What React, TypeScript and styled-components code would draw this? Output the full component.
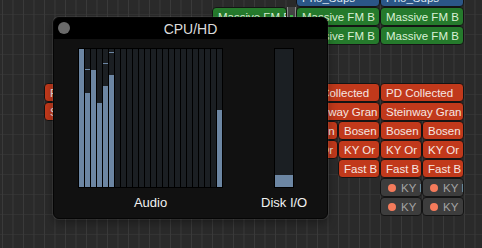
import styled, { createGlobalStyle, css } from 'styled-components';

const GlobalStyle = createGlobalStyle`
  html, body {
    margin: 0;
    padding: 0;
    background: #2a2a2a;
    overflow: hidden;
  }
`;

const Canvas = styled.div`
  position: relative;
  width: 482px;
  height: 248px;
  overflow: hidden;
  padding-left: 2px;
  box-sizing: border-box;
  background-color: #2a2a2a;
  background-image:
    linear-gradient(to right, #3a3a3a 1px, transparent 1px),
    linear-gradient(to bottom, #333 1px, transparent 1px);
  background-size: 10.5px 20px, 10.5px 20px;
  background-position: 2px 0, 0 14px;
  font-family: 'Liberation Sans', Arial, sans-serif;
`;

const ClipGrid = styled.div`
  display: grid;
  grid-template-columns: repeat(12, 42px);
  grid-template-rows: repeat(12, 19px);
  margin-top: -12px;
`;

type Tone = 'blue' | 'green' | 'red' | 'gray';

const tones: Record<Tone, { bg: string; fg: string }> = {
  blue: { bg: '#2b5687', fg: '#dfe8f2' },
  green: { bg: '#257a2c', fg: '#d9f1d6' },
  red: { bg: '#c1391b', fg: '#f6e7e2' },
  gray: { bg: '#3d3d3d', fg: '#a3a3a3' },
};

const Clip = styled.div<{ $col: number; $row: number; $span: number; $tone: Tone; $trim?: boolean }>`
  grid-column: ${({ $col, $span }) => `${$col} / span ${$span}`};
  grid-row: ${({ $row }) => $row};
  display: flex;
  align-items: center;
  gap: 5px;
  box-sizing: border-box;
  height: 19px;
  padding: 0 3px 0 5px;
  border: 1px solid #141414;
  border-radius: 4px;
  background: ${({ $tone }) => tones[$tone].bg};
  color: ${({ $tone }) => tones[$tone].fg};
  font-size: 11.5px;
  white-space: nowrap;
  overflow: hidden;
  ${({ $trim }) =>
    $trim &&
    css`
      width: calc(100% - 9px);
    `}
`;

const Dot = styled.span`
  flex: none;
  width: 8px;
  height: 8px;
  border-radius: 50%;
  background: #f57b5b;
  margin-left: 2px;
`;

const ClipTail = styled.div<{ $col: number; $row: number }>`
  grid-column: ${({ $col }) => $col};
  grid-row: ${({ $row }) => $row};
  justify-self: end;
  width: 9px;
  box-sizing: border-box;
  border-left: 1px solid #8a8a8a;
  border-right: 1px solid #8a8a8a;
  background: #444;
  display: flex;
  align-items: center;
  justify-content: center;

  &::after {
    content: '';
    width: 3px;
    height: 4px;
    background: #3bbf4a;
  }
`;

const Window = styled.div`
  position: absolute;
  left: 53px;
  top: 17px;
  width: 275px;
  height: 202px;
  box-sizing: border-box;
  display: flex;
  flex-direction: column;
  background: #111;
  border: 1px solid #050505;
  border-radius: 6px;
  overflow: hidden;
  box-shadow: 0 0 0 1px rgba(255, 255, 255, 0.07), 0 4px 10px rgba(0, 0, 0, 0.35);
`;

const TitleBar = styled.div`
  position: relative;
  flex: none;
  height: 21px;
  background: #000;
  display: flex;
  align-items: center;
  justify-content: center;
  color: #dcdcdc;
  font-size: 14px;
`;

const CloseButton = styled.span`
  position: absolute;
  left: 4px;
  top: 4px;
  width: 12px;
  height: 12px;
  border-radius: 50%;
  background: #6a6a6a;
`;

const Body = styled.div`
  flex: 1;
  display: flex;
  align-items: flex-start;
  gap: 38px;
  padding: 9px 0 0 24px;
`;

const MeterColumn = styled.div`
  display: flex;
  flex-direction: column;
  align-items: center;
`;

const MeterFrame = styled.div<{ $width: number }>`
  display: flex;
  gap: 1px;
  width: ${({ $width }) => $width}px;
  height: 140px;
  box-sizing: border-box;
  padding: 1px;
  background: #000;
`;

const Bar = styled.div`
  position: relative;
  flex: 1;
  background: #1b1f23;
`;

const Fill = styled.div`
  position: absolute;
  left: 0;
  right: 0;
  bottom: 0;
  background: #6c86a3;
`;

const Peak = styled.div`
  position: absolute;
  left: 0;
  right: 0;
  height: 1px;
  background: #6c86a3;
`;

const Label = styled.div`
  margin-top: 7px;
  color: #f2f2f2;
  font-size: 13px;
  line-height: 15px;
  white-space: nowrap;
`;

const audio: { level: number; peak?: number }[] = [
  { level: 1 },
  { level: 0.68, peak: 0.85 },
  { level: 0.85 },
  { level: 0.61 },
  { level: 0.73, peak: 0.89 },
  { level: 0.81, peak: 0.97 },
  ...Array.from({ length: 17 }, () => ({ level: 0 })),
  { level: 0.56 },
];

const clips: { col: number; row: number; span: number; tone: Tone; text: string; trim?: boolean; dot?: boolean }[] = [
  { col: 8, row: 1, span: 2, tone: 'blue', text: 'Pno_Sups' },
  { col: 10, row: 1, span: 2, tone: 'blue', text: 'Pno_Sups' },
  { col: 6, row: 2, span: 2, tone: 'green', text: 'Massive FM B', trim: true },
  { col: 8, row: 2, span: 2, tone: 'green', text: 'Massive FM B' },
  { col: 10, row: 2, span: 2, tone: 'green', text: 'Massive FM B' },
  { col: 8, row: 3, span: 2, tone: 'green', text: 'Massive FM B' },
  { col: 10, row: 3, span: 2, tone: 'green', text: 'Massive FM B' },
  { col: 2, row: 6, span: 2, tone: 'red', text: 'PD Collected' },
  { col: 8, row: 6, span: 2, tone: 'red', text: 'PD Collected' },
  { col: 10, row: 6, span: 2, tone: 'red', text: 'PD Collected' },
  { col: 2, row: 7, span: 2, tone: 'red', text: 'Steinway Gran' },
  { col: 8, row: 7, span: 2, tone: 'red', text: 'Steinway Gran' },
  { col: 10, row: 7, span: 2, tone: 'red', text: 'Steinway Gran' },
  ...[8, 9, 10, 11].map((col) => ({ col, row: 8, span: 1, tone: 'red' as Tone, text: 'Bosen' })),
  ...[8, 9, 10, 11].map((col) => ({ col, row: 9, span: 1, tone: 'red' as Tone, text: 'KY Or' })),
  ...[9, 10, 11].map((col) => ({ col, row: 10, span: 1, tone: 'red' as Tone, text: 'Fast B' })),
  ...[10, 11].map((col) => ({ col, row: 11, span: 1, tone: 'gray' as Tone, text: 'KY I', dot: true })),
  ...[10, 11].map((col) => ({ col, row: 12, span: 1, tone: 'gray' as Tone, text: 'KY', dot: true })),
];

export default function App() {
  return (
    <>
      <GlobalStyle />
      <Canvas>
        <ClipGrid>
          {clips.map((c, i) => (
            <Clip key={i} $col={c.col} $row={c.row} $span={c.span} $tone={c.tone} $trim={c.trim}>
              {c.dot && <Dot />}
              {c.text}
            </Clip>
          ))}
          <ClipTail $col={7} $row={2} />
        </ClipGrid>

        <Window>
          <TitleBar>
            <CloseButton />
            CPU/HD
          </TitleBar>
          <Body>
            <MeterColumn>
              <MeterFrame $width={145}>
                {audio.map((b, i) => (
                  <Bar key={i}>
                    <Fill style={{ height: `${b.level * 100}%` }} />
                    {b.peak && <Peak style={{ bottom: `${b.peak * 100}%` }} />}
                  </Bar>
                ))}
              </MeterFrame>
              <Label>Audio</Label>
            </MeterColumn>
            <MeterColumn>
              <MeterFrame $width={20}>
                <Bar>
                  <Fill style={{ height: '12px' }} />
                </Bar>
              </MeterFrame>
              <Label>Disk I/O</Label>
            </MeterColumn>
          </Body>
        </Window>
      </Canvas>
    </>
  );
}
